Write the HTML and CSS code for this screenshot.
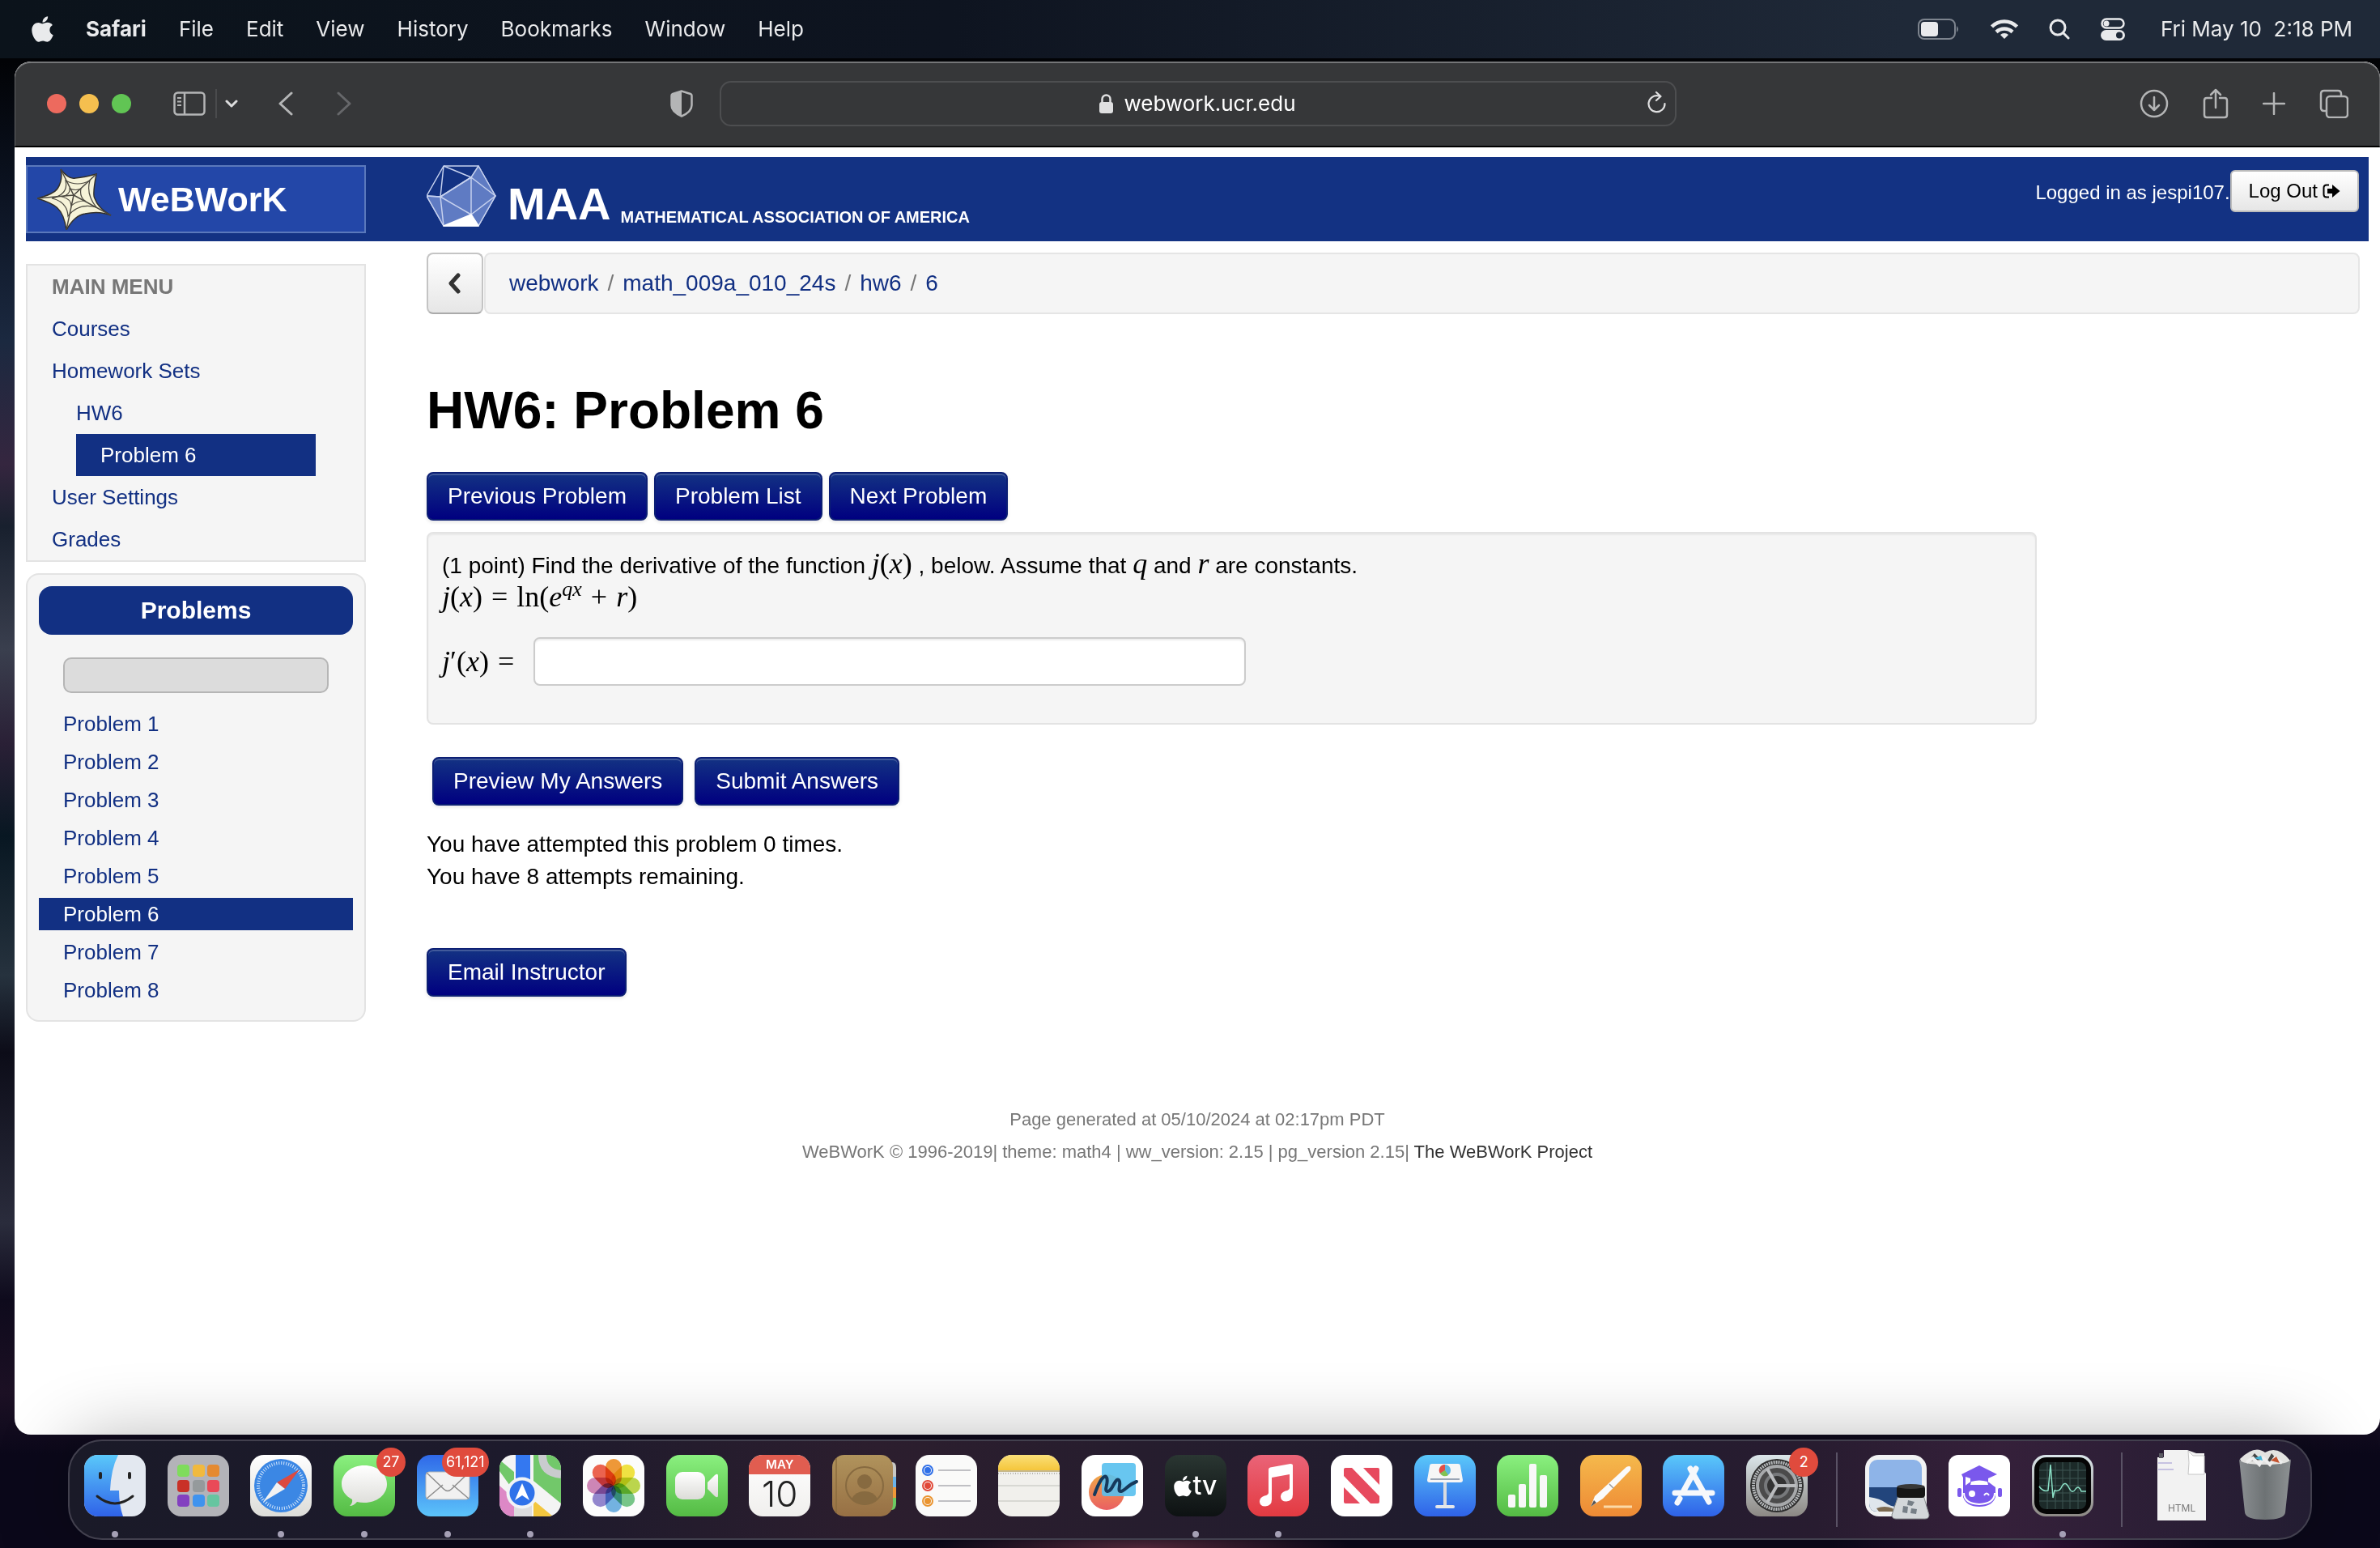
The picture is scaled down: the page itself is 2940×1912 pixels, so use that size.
FILE: index.html
```html
<!DOCTYPE html>
<html lang="en">
<head>
    <meta charset="UTF-8">
    <meta name="viewport" content="width=device-width, initial-scale=1.0">
    <title>HW6: Problem 6</title>
    <link rel="stylesheet" href="styles.css">
</head>
<body>

    <!-- shared gradients for the dock icons -->
    <svg class="defs" width="0" height="0" aria-hidden="true">
        <defs>
            <linearGradient id="gBlue" x1="0" y1="0" x2="0" y2="1"><stop offset="0" stop-color="#5ac8fa"/><stop offset="1" stop-color="#2f62e8"/></linearGradient>
            <linearGradient id="gMail" x1="0" y1="0" x2="0" y2="1"><stop offset="0" stop-color="#2f68e8"/><stop offset="1" stop-color="#5cc4fa"/></linearGradient>
            <linearGradient id="gGreen" x1="0" y1="0" x2="0" y2="1"><stop offset="0" stop-color="#8af07f"/><stop offset="1" stop-color="#54bb44"/></linearGradient>
            <linearGradient id="gRed" x1="0" y1="0" x2="0" y2="1"><stop offset="0" stop-color="#ea6478"/><stop offset="1" stop-color="#e33a41"/></linearGradient>
            <linearGradient id="gOrange" x1="0" y1="0" x2="0" y2="1"><stop offset="0" stop-color="#f5b94c"/><stop offset="1" stop-color="#ee8a35"/></linearGradient>
            <linearGradient id="gPeach" x1="0" y1="0" x2="0" y2="1"><stop offset="0" stop-color="#f0a848"/><stop offset="1" stop-color="#ea5f62"/></linearGradient>
            <linearGradient id="gWhite" x1="0" y1="0" x2="0" y2="1"><stop offset="0" stop-color="#ffffff"/><stop offset="1" stop-color="#dcdcd8"/></linearGradient>
            <linearGradient id="gBrown" x1="0" y1="0" x2="0" y2="1"><stop offset="0" stop-color="#b0935c"/><stop offset="1" stop-color="#977044"/></linearGradient>
            <linearGradient id="gYellow" x1="0" y1="0" x2="0" y2="1"><stop offset="0" stop-color="#fadf78"/><stop offset="1" stop-color="#f5c63b"/></linearGradient>
            <linearGradient id="gSteel" x1="0" y1="0" x2="0" y2="1"><stop offset="0" stop-color="#dbe6ea"/><stop offset="1" stop-color="#8c8884"/></linearGradient>
            <linearGradient id="gTrash" x1="0" y1="0" x2="1" y2="0"><stop offset="0" stop-color="#8b8f92"/><stop offset=".5" stop-color="#6d7274"/><stop offset="1" stop-color="#8d9193"/></linearGradient>
            <clipPath id="tile"><rect width="76" height="76" rx="17"/></clipPath>
        </defs>
    </svg>

    <header class="menubar">
        <nav class="menus">
            <svg class="apple" viewBox="0 28 384 456" width="27" height="32" fill="#e9eaec"><path d="M318.7 268.7c-.2-36.7 16.4-64.4 50-84.8-18.8-26.9-47.2-41.7-84.7-44.6-35.5-2.8-74.3 20.7-88.5 20.7-15 0-49.4-19.7-76.4-19.7C63.3 141.2 4 184.8 4 273.5q0 39.3 14.4 81.2c12.8 36.7 59 126.7 107.2 125.2 25.2-.6 43-17.9 75.8-17.9 31.8 0 48.3 17.9 76.4 17.9 48.6-.7 90.4-82.5 102.6-119.3-65.2-30.7-61.7-90-61.7-91.9zm-56.6-164.2c27.3-32.4 24.8-61.9 24-72.5-24.1 1.4-52 16.4-67.9 34.9-17.5 19.8-27.8 44.3-25.6 71.9 26.1 2 49.9-11.4 69.5-34.3z"/></svg>
            <button class="app-name">Safari</button>
            <button>File</button>
            <button>Edit</button>
            <button>View</button>
            <button>History</button>
            <button>Bookmarks</button>
            <button>Window</button>
            <button>Help</button>
        </nav>
        <div class="status">
            <svg width="52" height="26" viewBox="0 0 52 26"><rect x="1" y="1" width="45" height="24" rx="7" fill="none" stroke="#7d848e" stroke-width="2"/><rect x="4" y="4" width="21" height="18" rx="4" fill="#e9eaec"/><path d="M48 9q4 4 0 8z" fill="#7d848e"/></svg>
            <svg width="34" height="26" viewBox="0 0 34 26" fill="none" stroke="#e9eaec" stroke-width="4.500"><path d="M1.500 10a22 22 0 0 1 31 0"/><path d="M7 16.500a14.500 14.500 0 0 1 20 0"/><path d="M17 25l-5-5a7 7 0 0 1 10 0z" fill="#e9eaec" stroke="none"/></svg>
            <svg width="26" height="26" viewBox="0 0 26 26" fill="none" stroke="#e9eaec" stroke-width="3" stroke-linecap="round"><circle cx="11" cy="11" r="9"/><path d="M18 18l6 6"/></svg>
            <svg width="30" height="28" viewBox="0 0 30 28"><rect x="1.500" y="1.500" width="27" height="11" rx="5.500" fill="none" stroke="#e9eaec" stroke-width="2.500"/><circle cx="7" cy="7" r="3.500" fill="#e9eaec"/><rect y="15" width="30" height="13" rx="6.500" fill="#e9eaec"/><circle cx="23" cy="21.500" r="4" fill="#1f2938"/></svg>
            <span class="clock">Fri May 10&nbsp; 2:18 PM</span>
        </div>
    </header>

    <main class="window">
        <div class="toolbar">
            <div class="tools-left">
                <div class="lights">
                    <span class="light red"></span>
                    <span class="light yellow"></span>
                    <span class="light green"></span>
                </div>
                <svg class="side-icon" width="40" height="30" viewBox="0 0 40 30" fill="none" stroke="#b4b5b6" stroke-width="2.500"><rect x="1.500" y="1.500" width="37" height="27" rx="4"/><path d="M14 1v28"/><path d="M5 8h5M5 12.500h5M5 17h5" stroke-width="2"/></svg>
                <span class="tool-line"></span>
                <svg width="16" height="10" viewBox="0 0 16 10" fill="none" stroke="#dcdcdd" stroke-width="3" stroke-linecap="round" stroke-linejoin="round"><path d="M2 2l6 6 6-6"/></svg>
                <svg class="back-icon" width="18" height="30" viewBox="0 0 18 30" fill="none" stroke="#b4b5b6" stroke-width="3" stroke-linecap="round" stroke-linejoin="round"><path d="M16 2L2 15l14 13"/></svg>
                <svg class="fwd-icon" width="18" height="30" viewBox="0 0 18 30" fill="none" stroke="#66676a" stroke-width="3" stroke-linecap="round" stroke-linejoin="round"><path d="M2 2l14 13L2 28"/></svg>
                <svg class="shield" width="28" height="34" viewBox="0 0 28 34"><path d="M14 1.500L3 5q-1.500.5-1.500 2v12q0 8 12.500 13.500Q26.500 27 26.500 19V7q0-1.500-1.500-2z" fill="none" stroke="#b4b5b6" stroke-width="2.500"/><path d="M14 1.500L3 5q-1.500.5-1.500 2v12q0 8 12.500 13.500z" fill="#b4b5b6"/></svg>
            </div>
            <div class="address">
                <svg width="17" height="24" viewBox="0 0 17 24"><rect y="10" width="17" height="14" rx="3" fill="#dfdfe0"/><path d="M3.500 11V6.500a5 5 0 0 1 10 0V11" fill="none" stroke="#dfdfe0" stroke-width="2.500"/></svg>
                <span>webwork.ucr.edu</span>
                <svg class="reload" width="24" height="28" viewBox="0 0 24 28" fill="none" stroke="#dfdfe0" stroke-width="2.200" stroke-linecap="round" stroke-linejoin="round"><path d="M14 6.500A10 10 0 1 0 21.500 16M11 2l5.500 5-5.500 5"/></svg>
            </div>
            <div class="tools-right">
                <svg width="36" height="36" viewBox="0 0 36 36" fill="none" stroke="#b4b5b6" stroke-width="2.500" stroke-linecap="round" stroke-linejoin="round"><circle cx="18" cy="18" r="16"/><path d="M18 10v16M12 20l6 6 6-6"/></svg>
                <svg width="32" height="38" viewBox="0 0 32 38" fill="none" stroke="#b4b5b6" stroke-width="2.500" stroke-linecap="round" stroke-linejoin="round"><path d="M11 12H5q-3 0-3 3v18q0 3 3 3h22q3 0 3-3V15q0-3-3-3h-6M16 24V2M10 8l6-6 6 6"/></svg>
                <svg width="28" height="28" viewBox="0 0 28 28" fill="none" stroke="#b4b5b6" stroke-width="2.500" stroke-linecap="round"><path d="M14 1v26M1 14h26"/></svg>
                <svg width="36" height="36" viewBox="0 0 36 36" fill="none" stroke="#b4b5b6" stroke-width="2.500"><rect x="9" y="9" width="26" height="26" rx="4"/><path d="M9 27H6q-4 0-4-4V6q0-4 4-4h17q4 0 4 4v3"/></svg>
            </div>
        </div>

        <div class="page">
            <div class="masthead">
                <a class="logo" href="#">
                    <svg width="92" height="76" viewBox="46 209 92 76"><path d="M75 210q10 13 18 11 12-1 26-5-5 26-2 30 4 12 20 21-14-6-32-2-13 2-23 20-3-20-11-27-6-6-25-12 20-5 25-12 7-11 4-24z" fill="#f6f3d8" stroke="#33302a" stroke-width="1.500"/><path d="M75 210l16 32 28-26M91 242l46 25M91 242l-9 43M91 242l-45 4" fill="none" stroke="#4b4840" stroke-width="1.500"/><path d="M81 224q15 8 30 0-5 17 8 33-22-6-35 11-1-18-20-22 21-5 17-22zM86 234q8 3 14 0-2 10 5 15-10 0-17 6 0-8-11-11 10-3 9-10z" fill="none" stroke="#4b4840" stroke-width="1.200"/></svg>
                    <span>WeBWorK</span>
                </a>
                <a class="maa" href="#">
                    <svg width="86" height="76" viewBox="0 -1 86 76" stroke="#c6d1ee" stroke-width="1.500" stroke-linejoin="round"><path d="M21 0H64L85 37 64 74H21L0 37z" fill="#133283"/><path d="M64 0L85 37 64 74 21 74 0 37 17 38 55 14z" fill="#5f7bc3"/><path d="M21 0L55 14M21 0L17 38M0 37L17 38 55 14V60L17 38 21 74M55 14L85 37 55 60 64 74" fill="none"/><path d="M21 74L55 60 64 74z" fill="#fff" stroke="#fff"/></svg>
                    <span class="maa-short">MAA</span>
                    <span class="maa-long">MATHEMATICAL ASSOCIATION OF AMERICA</span>
                </a>
                <div class="login">
                    <span>Logged in as jespi107.</span>
                    <button class="logout">Log Out <svg width="22" height="18" viewBox="0 0 22 18"><path d="M8 1.500H5Q1.500 1.500 1.500 5v8q0 3.500 3.500 3.500h3" fill="none" stroke="#000" stroke-width="2"/><path d="M6 6h6V1l9.500 8L12 17v-5H6z"/></svg></button>
                </div>
            </div>

            <div class="columns">
                <aside class="sidebar">
                    <nav class="main-menu">
                        <h2>MAIN MENU</h2>
                        <ul>
                            <li><a href="#">Courses</a></li>
                            <li><a href="#">Homework Sets</a>
                                <ul>
                                    <li><a href="#">HW6</a>
                                        <ul class="current"><li><a href="#" class="active">Problem 6</a></li></ul>
                                    </li>
                                </ul>
                            </li>
                            <li><a href="#">User Settings</a></li>
                            <li><a href="#">Grades</a></li>
                        </ul>
                    </nav>
                    <nav class="problems">
                        <h2>Problems</h2>
                        <div class="progress"></div>
                        <ul>
                            <li><a href="#">Problem 1</a></li>
                            <li><a href="#">Problem 2</a></li>
                            <li><a href="#">Problem 3</a></li>
                            <li><a href="#">Problem 4</a></li>
                            <li><a href="#">Problem 5</a></li>
                            <li><a href="#" class="active">Problem 6</a></li>
                            <li><a href="#">Problem 7</a></li>
                            <li><a href="#">Problem 8</a></li>
                        </ul>
                    </nav>
                </aside>

                <section class="content">
                    <div class="crumb-row">
                        <button class="up" aria-label="Up"><svg width="18" height="26" viewBox="0 0 18 26" fill="none" stroke="#333" stroke-width="5" stroke-linecap="round" stroke-linejoin="round"><path d="M13 3L4 13l9 10"/></svg></button>
                        <div class="breadcrumb">
                            <a href="#">webwork</a><i>/</i><a href="#">math_009a_010_24s</a><i>/</i><a href="#">hw6</a><i>/</i><a href="#">6</a>
                        </div>
                    </div>

                    <h1>HW6: Problem 6</h1>

                    <div class="btn-row">
                        <button class="btn">Previous Problem</button>
                        <button class="btn">Problem List</button>
                        <button class="btn">Next Problem</button>
                    </div>

                    <div class="problem-box">
                        <p>(1 point) Find the derivative of the function <span class="math"><i>j</i>(<i>x</i>)</span> , below. Assume that <span class="math"><i>q</i></span> and <span class="math"><i>r</i></span> are constants.</p>
                        <p><span class="math"><i>j</i>(<i>x</i>) <b>=</b> ln(<i>e</i><sup><i>qx</i></sup> <b>+</b> <i>r</i>)</span></p>
                        <div class="answer">
                            <label for="ans" class="math"><i>j</i>′(<i>x</i>) <b>=</b></label>
                            <input type="text" id="ans">
                        </div>
                    </div>

                    <div class="btn-row submit-row">
                        <button class="btn">Preview My Answers</button>
                        <button class="btn">Submit Answers</button>
                    </div>

                    <p>You have attempted this problem 0 times.</p>
                    <p>You have 8 attempts remaining.</p>

                    <button class="btn email">Email Instructor</button>
                </section>
            </div>

            <footer>
                <p>Page generated at 05/10/2024 at 02:17pm PDT</p>
                <p>WeBWorK © 1996-2019| theme: math4 | ww_version: 2.15 | pg_version 2.15| <a href="#">The WeBWorK Project</a></p>
            </footer>
        </div>
    </main>

    <nav class="dock">
        <div class="app running">
            <svg viewBox="0 0 76 76"><g clip-path="url(#tile)"><rect width="76" height="76" fill="#e3e8f0"/><path d="M0 0h42q-9 18-10 44h11q0 18 5 32H0z" fill="url(#gBlue)"/></g><path d="M20 23v5M56 23v5" stroke="#222" stroke-width="4" stroke-linecap="round"/><path d="M16 51q22 18 44 0" fill="none" stroke="#222" stroke-width="3" stroke-linecap="round"/></svg>
        </div>
        <div class="app">
            <svg viewBox="0 0 76 76"><rect width="76" height="76" rx="17" fill="#b3b3b8"/><g><rect x="12" y="12" width="15" height="15" rx="4" fill="#7fdc5c"/><rect x="31" y="12" width="15" height="15" rx="4" fill="#f1b93e"/><rect x="49" y="12" width="15" height="15" rx="4" fill="#e58a30"/><rect x="12" y="31" width="15" height="15" rx="4" fill="#c93127"/><rect x="31" y="31" width="15" height="15" rx="4" fill="#959a9c"/><rect x="49" y="31" width="15" height="15" rx="4" fill="#e94a58"/><rect x="12" y="49" width="15" height="15" rx="4" fill="#8340c0"/><rect x="31" y="49" width="15" height="15" rx="4" fill="#3f93ee"/><rect x="49" y="49" width="15" height="15" rx="4" fill="#66c5a0"/></g></svg>
        </div>
        <div class="app running">
            <svg viewBox="0 0 76 76"><rect width="76" height="76" rx="17" fill="url(#gWhite)"/><circle cx="38" cy="38" r="33" fill="#3b87e4"/><circle cx="38" cy="38" r="28" fill="none" stroke="#d5e7fb" stroke-width="4" stroke-dasharray="1 2"/><path d="M61 18L43 42 33 34z" fill="#dc4a40"/><path d="M16 58L33 34l10 8z" fill="#f2f2f2"/></svg>
        </div>
        <div class="app running">
            <svg viewBox="0 0 76 76"><rect width="76" height="76" rx="17" fill="url(#gGreen)"/><path d="M38 13c16 0 28 10 28 23S54 59 38 59q-5 0-9-1-4 5-9 5 4-4 3-8C15 51 10 44 10 36c0-13 12-23 28-23z" fill="url(#gWhite)"/></svg>
            <span class="badge">27</span>
        </div>
        <div class="app running">
            <svg viewBox="0 0 76 76"><rect width="76" height="76" rx="17" fill="url(#gMail)"/><rect x="11" y="21" width="54" height="34" rx="4" fill="#f1f1f1" stroke="#b5b5b5"/><path d="M12 54l20-17M64 54L44 37M12 22l21 20q5 5 10 0l21-20" fill="none" stroke="#8d8d8d" stroke-width="1.500"/></svg>
            <span class="badge">61,121</span>
        </div>
        <div class="app running">
            <svg viewBox="0 0 76 76"><g clip-path="url(#tile)"><rect width="76" height="76" fill="#f4f4f4"/><path d="M0 6l18 15v24L0 20zM42 0h34v60L42 32z" fill="#72c86a"/><path d="M0 38l18 16v22H0z" fill="#dd88c6"/><path d="M20 0h18v50H20z" fill="#3478f0"/><path d="M18 54h22v22H18z" fill="#dcdcde"/><path d="M42 76V56l24 20z" fill="#f3c63f"/><path d="M53 0q0 22 23 24" fill="none" stroke="#c9cbce" stroke-width="10"/></g><circle cx="28" cy="47" r="17.500" fill="#2f72ea" stroke="#f1f3f6" stroke-width="4"/><path d="M28 35l9 21-9-6-9 6z" fill="#fff"/></svg>
        </div>
        <div class="app">
            <svg class="petals" viewBox="0 0 76 76"><rect width="76" height="76" rx="17" fill="#fcfcfc"/><g><rect x="28" y="5" width="20" height="33" rx="10" fill="#f19a38"/><rect x="28" y="5" width="20" height="33" rx="10" fill="#f2e544" transform="rotate(45 38 38)"/><rect x="28" y="5" width="20" height="33" rx="10" fill="#bdd84e" transform="rotate(90 38 38)"/><rect x="28" y="5" width="20" height="33" rx="10" fill="#78c88a" transform="rotate(135 38 38)"/><rect x="28" y="5" width="20" height="33" rx="10" fill="#74b4e4" transform="rotate(180 38 38)"/><rect x="28" y="5" width="20" height="33" rx="10" fill="#9488d0" transform="rotate(225 38 38)"/><rect x="28" y="5" width="20" height="33" rx="10" fill="#d088b8" transform="rotate(270 38 38)"/><rect x="28" y="5" width="20" height="33" rx="10" fill="#ee6450" transform="rotate(315 38 38)"/></g></svg>
        </div>
        <div class="app">
            <svg viewBox="0 0 76 76"><rect width="76" height="76" rx="17" fill="url(#gGreen)"/><rect x="11" y="21" width="37" height="34" rx="9" fill="url(#gWhite)"/><path d="M51 34l9-9q4-3 4 1v24q0 4-4 1l-9-9z" fill="url(#gWhite)"/></svg>
        </div>
        <div class="app calendar">
            <span class="month">MAY</span>
            <span class="day">10</span>
        </div>
        <div class="app">
            <svg viewBox="0 0 76 76"><path d="M66 9h8q5 0 5 7v11H66z" fill="#c8c8c4"/><path d="M66 27h13v13H66z" fill="#6ab4ea"/><path d="M66 40h13v13H66z" fill="#f09838"/><path d="M66 53h13v7q0 7-5 8h-8z" fill="#6ccb62"/><rect width="75" height="76" rx="15" fill="url(#gBrown)"/><path d="M5 4v68" stroke="#8a6b3e" stroke-width="1.500"/><circle cx="40" cy="38" r="23" fill="none" stroke="#876a40" stroke-width="2"/><circle cx="40" cy="33" r="9" fill="#876a40"/><path d="M24 54q5-9 16-9t16 9q-16 15-32 0z" fill="#876a40"/></svg>
        </div>
        <div class="app">
            <svg viewBox="0 0 76 76"><rect width="76" height="76" rx="17" fill="#fafaf9"/><g fill="none" stroke-width="2"><circle cx="15" cy="19" r="6" stroke="#2f6fe8"/><circle cx="15" cy="38" r="6" stroke="#e14838"/><circle cx="15" cy="57" r="6" stroke="#ea9430"/></g><circle cx="15" cy="19" r="4" fill="#2f6fe8"/><circle cx="15" cy="38" r="4" fill="#e14838"/><circle cx="15" cy="57" r="4" fill="#ea9430"/><path d="M28 19h40M28 38h40M28 57h40" stroke="#c0c0c4" stroke-width="2"/></svg>
        </div>
        <div class="app">
            <svg viewBox="0 0 76 76"><g clip-path="url(#tile)"><rect width="76" height="76" fill="#f1f0ec"/><rect width="76" height="19" fill="url(#gYellow)"/><path d="M0 20h76" stroke="#b9a46a" stroke-width="1.500"/><path d="M0 23h76" stroke="#b5b5b0" stroke-width="2" stroke-dasharray="1 2"/><path d="M0 38h76M0 57h76" stroke="#cfcfca" stroke-width="1.500"/></g></svg>
        </div>
        <div class="app">
            <svg viewBox="0 0 76 76"><rect width="76" height="76" rx="17" fill="#fff"/><circle cx="31" cy="46" r="22" fill="url(#gPeach)"/><rect x="25" y="10" width="42" height="41" rx="4" fill="#58c0ee" opacity=".9"/><path d="M16 49C22 32 28 23 31 28c3 6-4 16 1 17 6 1 9-17 14-14 4 3-3 15 3 14 5-1 8-8 19-12" fill="none" stroke="#163a5c" stroke-width="4" stroke-linecap="round"/></svg>
        </div>
        <div class="app running tv">
            <svg viewBox="0 28 384 456" width="22" height="27" fill="#fff"><path d="M318.7 268.7c-.2-36.7 16.4-64.4 50-84.8-18.8-26.9-47.2-41.7-84.7-44.6-35.5-2.8-74.3 20.7-88.5 20.7-15 0-49.4-19.7-76.4-19.7C63.3 141.2 4 184.8 4 273.5q0 39.3 14.4 81.2c12.8 36.7 59 126.7 107.2 125.2 25.2-.6 43-17.9 75.8-17.9 31.8 0 48.3 17.9 76.4 17.9 48.6-.7 90.4-82.5 102.6-119.3-65.2-30.7-61.7-90-61.7-91.9zm-56.6-164.2c27.3-32.4 24.8-61.9 24-72.5-24.1 1.4-52 16.4-67.9 34.9-17.5 19.8-27.8 44.3-25.6 71.9 26.1 2 49.9-11.4 69.5-34.3z"/></svg>
            <span>tv</span>
        </div>
        <div class="app running">
            <svg viewBox="0 0 76 76"><rect width="76" height="76" rx="17" fill="url(#gRed)"/><path d="M26 18q0-2 2-2.500L53 11q3 0 3 2v36q0 8-8 8.500-7 0-7-6 0-5 6-7 5-1 5-4V24l-22 4v27q0 8-8 8.500-7 0-7-6 0-5 6-7 5-1 5-4z" fill="#fff"/></svg>
        </div>
        <div class="app">
            <svg viewBox="0 0 76 76"><rect width="76" height="76" rx="17" fill="#fff"/><path d="M18 16h8l34 35v7q0 2-2 2h-9L16 26v-8q0-2 2-2z" fill="#e74a5e"/><path d="M40 16h18q2 0 2 2v19zM16 40l20 20H18q-2 0-2-2z" fill="#e74a5e"/></svg>
        </div>
        <div class="app">
            <svg viewBox="0 0 76 76"><rect width="76" height="76" rx="17" fill="url(#gBlue)"/><path d="M22 11h32q3 0 3 3l3 17q0 3-3 3H19q-3 0-3-3l3-17q0-3 3-3z" fill="#f6f6f6"/><path d="M20 30h36" stroke="#9aa5b5" stroke-width="2"/><circle cx="38" cy="19" r="7" fill="#5bb5e6"/><path d="M38 19v-7a7 7 0 0 0-6 11z" fill="#e34f48"/><path d="M38 19l-6 4a7 7 0 0 0 10 2z" fill="#82c252"/><path d="M36 34h4v28h-4z" fill="#d8dbe0"/><rect x="26" y="62" width="24" height="4" rx="2" fill="#e5e7ea"/></svg>
        </div>
        <div class="app">
            <svg viewBox="0 0 76 76"><rect width="76" height="76" rx="17" fill="url(#gGreen)"/><g fill="#f8f8f8"><rect x="14" y="49" width="9" height="16" rx="2"/><rect x="27" y="36" width="9" height="29" rx="2"/><rect x="40" y="11" width="9" height="54" rx="2"/><rect x="53" y="25" width="9" height="40" rx="2"/></g></svg>
        </div>
        <div class="app">
            <svg viewBox="0 0 76 76"><rect width="76" height="76" rx="17" fill="url(#gOrange)"/><path d="M29 64h35" stroke="#fbd9a8" stroke-width="3"/><path d="M13 64l5-13 39-36q7-3 5 4L28 54z" fill="#fafafa"/><path d="M13 64l4-8 3 3z" fill="#555"/><path d="M36 36l5 5" stroke="#999" stroke-width="1.500"/></svg>
        </div>
        <div class="app">
            <svg viewBox="0 0 76 76"><rect width="76" height="76" rx="17" fill="url(#gBlue)"/><path d="M41 17L26 44M15 47h46M34 17l23 41M21 54l-3 5" fill="none" stroke="#f6f8fb" stroke-width="7" stroke-linecap="round"/></svg>
        </div>
        <div class="app">
            <svg viewBox="0 0 76 76"><rect width="76" height="76" rx="17" fill="url(#gSteel)"/><circle cx="38" cy="38" r="33" fill="#2d2d2d"/><circle cx="38" cy="38" r="29" fill="none" stroke="#b5b8ba" stroke-width="4" stroke-dasharray="2 1"/><circle cx="38" cy="38" r="24" fill="#4b4b4b" stroke="#a6a8aa" stroke-width="4"/><circle cx="38" cy="38" r="14" fill="#333" stroke="#77797b" stroke-width="4"/><path d="M38 38h24M38 38L26 17M38 38L26 59" stroke="#b9bbbd" stroke-width="4"/></svg>
            <span class="badge">2</span>
        </div>
        <span class="divider"></span>
        <div class="app">
            <svg viewBox="0 0 76 76"><rect width="76" height="76" rx="17" fill="#f1f2f3"/><rect x="5" y="6" width="65" height="64" rx="10" fill="#8eb4e8"/><path d="M5 40h65v20q0 10-10 10H15Q5 70 5 60z" fill="#22457c"/><path d="M5 52q14 2 20 7t15 5v6H15Q5 70 5 60z" fill="#dfe6ec"/><path d="M14 66q10-4 20 0l2 4H17z" fill="#7c6a50"/><path d="M41 50h31l7 24q0 5-5 5H38q-5 0-5-5z" fill="#d3d7da" stroke="#85898c"/><path d="M53 56l8 2-3 5-6-1zM47 63l6 1-1 8-6-1zM57 66l7 1-1 6-7-1z" fill="#767f87"/><rect x="39" y="38" width="35" height="15" rx="4" fill="#161616"/><ellipse cx="56.500" cy="39" rx="17" ry="3" fill="#383838"/></svg>
        </div>
        <div class="app">
            <svg viewBox="0 0 76 76"><rect width="76" height="76" rx="12" fill="#fff"/><path d="M38 13l22 11-11 5v6q-11-4-22 0v-6l-6-2v14l-3 3v-16l-2-4z" fill="#7a58ec"/><path d="M26 34q12-5 24 0l8 6v12q-4 12-20 12t-20-12V40z" fill="#7a58ec"/><path d="M28 33q10-3 20 0l1 4H27z" fill="#fff"/><rect x="11" y="41" width="5" height="11" rx="2" fill="#7a58ec"/><rect x="61" y="41" width="5" height="11" rx="2" fill="#7a58ec"/><path d="M19 47q0 13 19 14 19-1 19-14" fill="none" stroke="#fff" stroke-width="2"/><circle cx="29" cy="48" r="4" fill="#fff"/><path d="M44 50q3-5 6 0" fill="none" stroke="#fff" stroke-width="2"/></svg>
        </div>
        <div class="app running">
            <svg viewBox="0 0 76 76"><rect width="76" height="76" rx="17" fill="url(#gSteel)"/><rect x="3" y="3" width="70" height="70" rx="15" fill="#050505"/><rect x="9" y="9" width="58" height="58" rx="8" fill="#1c2a29"/><path d="M19 9v58M29 9v58M38 9v58M47 9v58M57 9v58M9 19h58M9 29h58M9 38h58M9 47h58M9 57h58" stroke="#3d5552" stroke-width="1"/><path d="M9 39q5 7 11 5l3-32 3 41 2-9q6 2 9-5 4-8 9 2 4 8 8 1 4-5 7 3h6" fill="none" stroke="#8be0c6" stroke-width="1.500"/></svg>
        </div>
        <span class="divider"></span>
        <div class="app html-file">
            <svg viewBox="0 0 60 88"><path d="M0 10h8V1h29l11 4h10v23l2 2v58H0z" fill="#f2f2f2"/><path d="M38 2q2 15 0 29h20V8H44z" fill="#fff" stroke="#c6c6c6"/><path d="M1 17h17M1 25h19" stroke="#b8b3dc" stroke-width="1.500"/><path d="M2 5h5v6H2z" fill="#5b5b63"/></svg>
            <span>HTML</span>
        </div>
        <div class="app trash">
            <svg viewBox="0 0 66 88"><path d="M2 12Q20-6 33 4q16-9 31 10L58 22H6z" fill="#e3e3e1"/><path d="M12 15l8-10 8 8zM35 16l6-11 8 9z" fill="#474747"/><path d="M1 12q2 7 32 7t32-7l-7 66q-1 9-25 9T8 78z" fill="url(#gTrash)"/><path d="M10 16l8-5 8 8 5-8 8 8 6-8 9 6" fill="none" stroke="#eee" stroke-width="4"/><path d="M20 11l8-3 2 6z" fill="#42b4d8"/><path d="M40 14l7-5 4 8z" fill="#c5532f"/></svg>
        </div>
    </nav>

</body>
</html>
```
FILE: styles.css
```css
* { margin: 0; padding: 0; box-sizing: border-box; }
body {
    min-height: 100vh; display: flex; flex-direction: column;
    font-family: "Liberation Sans", Arial, sans-serif; font-size: 28px; line-height: 40px; color: #000;
    background:
        radial-gradient(ellipse 260px 30px at 48% 100%, #5a2c40, transparent),
        radial-gradient(ellipse 240px 140px at 85% 100%, #35143a, transparent),
        linear-gradient(#020306 4%, #0b1220 12%, #1b2940 22%, #35263f 30%, #18202e 34%, #3a3f4e 42%, #2a2036 48%, #081722 54%, #26323e 63%, #0c0c18 68%, #2a2c3c 79%, #0e0a1c 84%, #1c1024 90%, #0b081a 94%);
}
ul { list-style: none; }
a { color: #123083; text-decoration: none; }
button { font: inherit; color: inherit; background: none; border: 0; cursor: pointer; }
svg { display: block; flex: none; }
.defs { position: absolute; }

/* menu bar */
.menubar {
    height: 72px; padding: 0 34px 0 39px; display: flex; justify-content: space-between; align-items: center;
    background: linear-gradient(90deg, #0b131b, #0e1420 40%, #1f2938 80%);
    font-family: Inter, "Liberation Sans", sans-serif; font-size: 26px; color: #e9eaec;
}
.menus { display: flex; align-items: center; gap: 40px; }
.menus .app-name { font-weight: 700; }
.status { display: flex; align-items: center; gap: 38px; }
.clock { padding-left: 6px; }

/* browser window */
.window {
    flex: 1; margin: 4px 0 0 18px; display: flex; flex-direction: column; overflow: hidden;
    border-radius: 20px; background: #fff;
}
.toolbar {
    height: 106px; padding-bottom: 2px; display: flex; align-items: center; background: #363739;
    border: 1px solid #606163; border-top: 2px solid #757678; border-bottom: 2px solid #000;
    border-radius: 20px 20px 0 0;
}
.tools-left, .tools-right { flex: 1; display: flex; align-items: center; }
.tools-left { padding-left: 39px; }
.tools-right { justify-content: flex-end; gap: 42px; padding-right: 38px; }
.lights { display: flex; gap: 16px; }
.light { width: 24px; height: 24px; border-radius: 50%; }
.red { background: #ed6a5e; }
.yellow { background: #f5bf4f; }
.green { background: #61c554; }
.side-icon { margin-left: 52px; }
.tool-line { width: 2px; height: 36px; margin: 0 10px 0 12px; background: #4a4b4d; }
.back-icon { margin-left: 50px; }
.fwd-icon { margin-left: 54px; }
.shield { margin-left: auto; margin-right: 33px; }
.address {
    flex: 0 1 1182px; height: 56px; position: relative;
    display: flex; justify-content: center; align-items: center; gap: 13px;
    border: 2px solid #4d4e50; border-radius: 14px;
    font-family: Inter, "Liberation Sans", sans-serif; font-size: 26px; color: #fff;
}
.address .reload { position: absolute; right: 10px; top: 10px; }

/* page header */
.page { flex: 1; padding: 12px 14px; }
.masthead { display: flex; height: 104px; padding: 10px 12px 10px 0; background: #133283; }
.logo {
    width: 420px; height: 84px; padding-left: 12px; display: flex; align-items: center; gap: 8px;
    background: #2347a8; border: 2px solid #5a78bb;
    color: #fff; font-size: 43px; font-weight: bold;
}
.maa { display: flex; align-items: flex-end; margin-left: 75px; padding-bottom: 8px; color: #fff; font-weight: bold; line-height: 24px; }
.maa-short { font-size: 56px; line-height: 56px; margin-left: 14px; }
.maa-long { font-size: 20px; margin-left: 12px; }
.login { margin-left: auto; display: flex; align-items: flex-start; font-size: 24px; color: #fff; }
.login span { padding-top: 14px; line-height: 40px; }
.logout {
    height: 52px; margin-top: 6px; padding: 0 21px; display: flex; align-items: center; gap: 6px; white-space: nowrap;
    background: linear-gradient(#fff, #e6e6e6); border: 2px solid #bbb; border-radius: 6px; color: #000;
}

/* sidebar */
.columns { display: flex; gap: 75px; padding-right: 11px; }
.sidebar { width: 420px; flex: none; padding-top: 28px; font-size: 26px; }
.main-menu { padding: 0 30px; background: #f5f5f5; border: 2px solid #e3e3e3; }
.main-menu h2 { font-size: 26px; line-height: 52px; color: #777; }
.main-menu a { display: block; line-height: 52px; }
.main-menu ul ul { padding-left: 30px; }
.main-menu ul .current { padding: 0 30px 0 0; }
.main-menu .active { padding-left: 30px; background: #123083; color: #fff; }
.problems { margin-top: 14px; padding: 14px 14px 10px; background: #f5f5f5; border: 2px solid #e3e3e3; border-radius: 16px; }
.problems h2 { font-size: 30px; line-height: 60px; text-align: center; background: #123083; color: #fff; border-radius: 16px; }
.progress { height: 44px; margin: 28px 30px 18px; background: #dcdcdc; border: 2px solid #b5b5b5; border-radius: 10px; }
.problems li { margin-bottom: 7px; }
.problems li a { display: block; padding-left: 30px; line-height: 40px; }
.problems li .active { background: #123083; color: #fff; }

/* main column */
.content { flex: 1; padding-top: 14px; }
.crumb-row { display: flex; gap: 1px; }
.up {
    width: 70px; height: 76px; display: flex; justify-content: center; align-items: center;
    background: linear-gradient(#fff, #e6e6e6); border: 2px solid #c4c4c4; border-bottom-color: #aaa; border-radius: 8px;
}
.breadcrumb { flex: 1; padding: 16px 29px; background: #f5f5f5; border: 2px solid #e5e5e5; border-radius: 8px; }
.breadcrumb i { margin: 0 11px; font-style: normal; color: #777; }
h1 { margin: 79px 0 36px; font-size: 64px; line-height: 80px; }
.btn-row { display: flex; gap: 8px; }
.btn {
    height: 60px; padding: 0 24px; color: #fff;
    background: linear-gradient(#133283, #000080); border: 2px solid #0c1f74; border-radius: 8px;
    box-shadow: inset 0 2px 0 rgba(255, 255, 255, .2), 0 2px 4px rgba(0, 0, 0, .1);
}
.problem-box {
    width: 1989px; max-width: 100%; margin-top: 14px; padding: 19px 17px 46px;
    background: #f5f5f5; border: 2px solid #e3e3e3; border-radius: 8px; box-shadow: inset 0 2px 2px rgba(0, 0, 0, .05);
}
.math { font-family: "Liberation Serif", "Times New Roman", serif; font-size: 36px; line-height: 36px; }
.math sup { font-size: 26px; line-height: 0; }
.math b { margin: 0 2px; font-weight: normal; }
.answer { display: flex; align-items: center; gap: 22px; margin-top: 27px; }
.answer input {
    width: 880px; height: 60px; padding: 0 12px; font: inherit;
    border: 2px solid #ccc; border-radius: 8px; box-shadow: inset 0 2px 2px rgba(0, 0, 0, .07);
}
.submit-row { gap: 14px; margin: 40px 0 28px 7px; }
.email { margin-top: 68px; }

footer { margin-top: 101px; text-align: center; font-size: 22px; color: #777; }
footer a { color: #333; }

/* dock */
.dock {
    position: relative; height: 124px; margin: 6px 84px 10px; padding: 0 18px; display: flex; justify-content: space-between; align-items: center;
    background: linear-gradient(90deg, #1a1a28, #1d1a2c 20%, #2c1e2e 36%, #201c2e 60%, #281c30 78%, #35203a 86%, #231d32);
    border: 2px solid #42404e; border-radius: 42px; box-shadow: 0 0 90px rgba(0, 0, 0, .3);
}
.app { position: relative; width: 76px; height: 76px; margin-bottom: 10px; }
.app > svg { overflow: visible; }
.running::after { content: ""; position: absolute; left: 34px; top: 94px; width: 8px; height: 8px; border-radius: 50%; background: #a5a0b5; }
.petals g rect { mix-blend-mode: multiply; }
.badge {
    position: absolute; right: -13px; top: -9px; min-width: 36px; height: 36px; padding: 0 5px; border-radius: 18px;
    background: #e04b3d; color: #fff; font-family: Inter, sans-serif; font-size: 18px; line-height: 36px; text-align: center;
}
.calendar { overflow: hidden; border-radius: 17px; background: linear-gradient(#fff, #f0efed); text-align: center; font-family: Inter, sans-serif; }
.month, .day { display: block; }
.month { background: #e15d50; color: #fff; font-size: 15px; font-weight: 600; line-height: 24px; }
.day { font-size: 44px; font-weight: 300; line-height: 48px; color: #222; }
.tv { display: flex; align-items: center; justify-content: center; gap: 2px; border-radius: 17px; background: linear-gradient(#2a3632, #0d1112); color: #fff; font-family: Inter, sans-serif; font-size: 32px; font-weight: 500; }
.divider { width: 2px; height: 92px; margin: 0 8px; background: #5a5265; }
.html-file svg { width: 60px; height: 88px; margin: -7px auto 0; }
.html-file span { position: absolute; left: 0; right: 0; bottom: 2px; font-family: Inter, sans-serif; font-size: 12px; line-height: 16px; color: #777; text-align: center; }
.trash svg { width: 66px; height: 88px; margin: -7px auto 0; }
```
